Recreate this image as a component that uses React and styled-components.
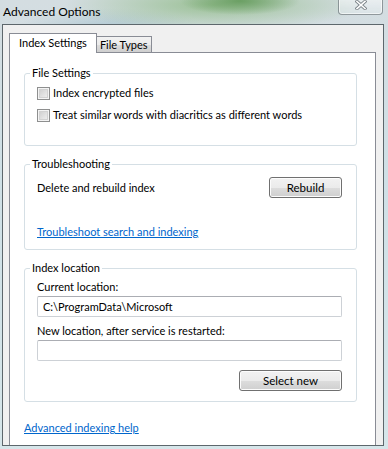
import styled, { createGlobalStyle } from "styled-components";

const GlobalStyle = createGlobalStyle`
  html, body {
    margin: 0;
    padding: 0;
  }
  body {
    font-family: Lato, "Open Sans", "Liberation Sans", sans-serif;
    font-size: 11px;
    line-height: 16px;
    color: #000;
  }
`;

function CloseGlyph() {
  return (
    <svg width="12" height="10" viewBox="0 0 12 10">
      <path d="M2 1.5 L10 8.5 M10 1.5 L2 8.5" stroke="#7d858a" strokeWidth="3.4" strokeLinecap="square" />
      <path d="M2 1.5 L10 8.5 M10 1.5 L2 8.5" stroke="#ffffff" strokeWidth="1.6" strokeLinecap="square" />
    </svg>
  );
}

function App() {
  return (
    <Screen>
      <GlobalStyle />
      <TitleBar>
        <Title>Advanced Options</Title>
        <CloseButton>
          <CloseGlyph />
        </CloseButton>
      </TitleBar>
      <Frame>
        <TabRow>
          <Tab $active>Index Settings</Tab>
          <Tab>File Types</Tab>
        </TabRow>
        <Panel>
          <Group>
            <Legend>File Settings</Legend>
            <GroupBody $top={4} $bottom={22}>
              <CheckRow>
                <CheckBox />
                <span>Index encrypted files</span>
              </CheckRow>
              <CheckRow>
                <CheckBox />
                <span>Treat similar words with diacritics as different words</span>
              </CheckRow>
            </GroupBody>
          </Group>

          <Group $gap={10}>
            <Legend>Troubleshooting</Legend>
            <GroupBody $top={5} $bottom={9}>
              <ButtonRow>
                <span>Delete and rebuild index</span>
                <Button $width={73}>Rebuild</Button>
              </ButtonRow>
              <GroupLink href="#">Troubleshoot search and indexing</GroupLink>
            </GroupBody>
          </Group>

          <Group $gap={10}>
            <Legend>Index location</Legend>
            <GroupBody $top={3} $bottom={10}>
              <Label>Current location:</Label>
              <TextField defaultValue="C:\ProgramData\Microsoft" />
              <Label $space={6}>New location, after service is restarted:</Label>
              <TextField defaultValue="" />
              <RightAligned>
                <Button $width={103}>Select new</Button>
              </RightAligned>
            </GroupBody>
          </Group>

          <HelpLink href="#">Advanced indexing help</HelpLink>
        </Panel>
      </Frame>
    </Screen>
  );
}

const Screen = styled.div`
  width: 388px;
  height: 449px;
  overflow: hidden;
  background:
    radial-gradient(ellipse 60px 14px at 240px 1px, rgba(100, 155, 92, 0.9), rgba(120, 170, 110, 0) 100%),
    radial-gradient(ellipse 150px 26px at 215px 5px, rgba(140, 185, 130, 0.8), rgba(150, 190, 140, 0) 100%),
    radial-gradient(ellipse 90px 18px at 110px 26px, rgba(150, 185, 200, 0.5), rgba(150, 185, 200, 0) 100%),
    linear-gradient(180deg, #d4dde1 0%, #cfe0e6 40%, #d6e6ea 100%);
`;

const TitleBar = styled.div`
  height: 24px;
  display: flex;
  justify-content: space-between;
  align-items: flex-start;
  padding-left: 3px;
`;

const Title = styled.div`
  margin-top: 4px;
  font-size: 12px;
  line-height: 16px;
  color: #000;
`;

const CloseButton = styled.div`
  width: 45px;
  height: 17px;
  margin-top: -2px;
  margin-right: 5px;
  box-sizing: border-box;
  border: 1px solid rgba(70, 80, 86, 0.55);
  border-top: none;
  border-radius: 0 0 4px 4px;
  background: linear-gradient(180deg, rgba(255, 255, 255, 0.55), rgba(230, 238, 240, 0.35));
  box-shadow: inset 0 0 0 1px rgba(255, 255, 255, 0.6);
  display: flex;
  justify-content: center;
  align-items: center;
  padding-bottom: 2px;
`;

const Frame = styled.div`
  margin-left: 2px;
  width: 382px;
  height: 422px;
  box-sizing: border-box;
  border: 1px solid #5d676c;
  background: #f0f0f0;
  padding: 8px 7px 0 6px;
  overflow: hidden;
  display: flex;
  flex-direction: column;
`;

const TabRow = styled.div`
  display: flex;
  align-items: flex-end;
  margin-bottom: -1px;
  position: relative;
  z-index: 1;
`;

const Tab = styled.div`
  box-sizing: border-box;
  height: ${(p) => (p.$active ? "20px" : "17px")};
  padding: ${(p) => (p.$active ? "1px 9px 0" : "0 3px")};
  border: 1px solid #898c95;
  border-bottom: ${(p) => (p.$active ? "none" : "1px solid #898c95")};
  border-left: ${(p) => (p.$active ? "1px solid #898c95" : "none")};
  background: ${(p) => (p.$active ? "#ffffff" : "linear-gradient(180deg, #f2f2f2 0%, #ebebeb 50%, #dddddd 51%, #cfcfcf 100%)")};
  line-height: 16px;
  white-space: nowrap;
`;

const Panel = styled.div`
  flex-shrink: 0;
  height: 420px;
  box-sizing: border-box;
  background: #fff;
  border: 1px solid #898c95;
  padding: 12px 18px 0 14px;
`;

const Group = styled.fieldset`
  margin: ${(p) => p.$gap || 0}px 0 0;
  padding: 0;
  border: 1px solid #d5dfe5;
  border-radius: 3px;
  min-width: 0;
`;

const Legend = styled.legend`
  margin-left: 5px;
  padding: 0 2px;
  line-height: 16px;
`;

const GroupBody = styled.div`
  display: flex;
  flex-direction: column;
  padding: ${(p) => p.$top}px 14px ${(p) => p.$bottom}px 12px;
`;

const CheckRow = styled.label`
  display: flex;
  align-items: center;
  gap: 3px;
  height: 16px;
  white-space: nowrap;
  & + & {
    margin-top: 6px;
  }
`;

const CheckBox = styled.span`
  width: 13px;
  height: 13px;
  box-sizing: border-box;
  border: 1px solid #8e8f8f;
  background: linear-gradient(135deg, #c9c9c9 0%, #e4e4e4 60%, #f2f2f2 100%);
  box-shadow: inset 0 0 0 1px #f4f4f4, inset 0 0 0 2px #d2d2d2;
  flex-shrink: 0;
`;

const ButtonRow = styled.div`
  display: flex;
  justify-content: space-between;
  align-items: center;
  height: 21px;
`;

const Button = styled.button`
  width: ${(p) => p.$width}px;
  height: 21px;
  box-sizing: border-box;
  font: inherit;
  font-size: 11.5px;
  color: #000;
  padding: 0;
  border: 1px solid #707070;
  border-radius: 3px;
  background: linear-gradient(180deg, #f2f2f2 0%, #ebebeb 50%, #dddddd 51%, #cfcfcf 100%);
  box-shadow: inset 0 0 0 1px #fcfcfc;
`;

const GroupLink = styled.a`
  margin-top: 26px;
  align-self: flex-start;
  color: #0066cc;
  text-decoration: underline;
  line-height: 16px;
`;

const Label = styled.div`
  margin-top: ${(p) => p.$space || 0}px;
  line-height: 16px;
`;

const TextField = styled.input`
  margin-top: 1px;
  height: 21px;
  box-sizing: border-box;
  width: 100%;
  font: inherit;
  color: #000;
  padding: 0 5px;
  border: 1px solid #cdd1d6;
  border-top-color: #abadb3;
  border-radius: 2px;
  outline: none;
  background: #fff;
`;

const RightAligned = styled.div`
  display: flex;
  justify-content: flex-end;
  margin-top: 9px;
`;

const HelpLink = styled.a`
  display: inline-block;
  margin-top: 18px;
  color: #0066cc;
  text-decoration: underline;
  line-height: 16px;
`;

export default App;
